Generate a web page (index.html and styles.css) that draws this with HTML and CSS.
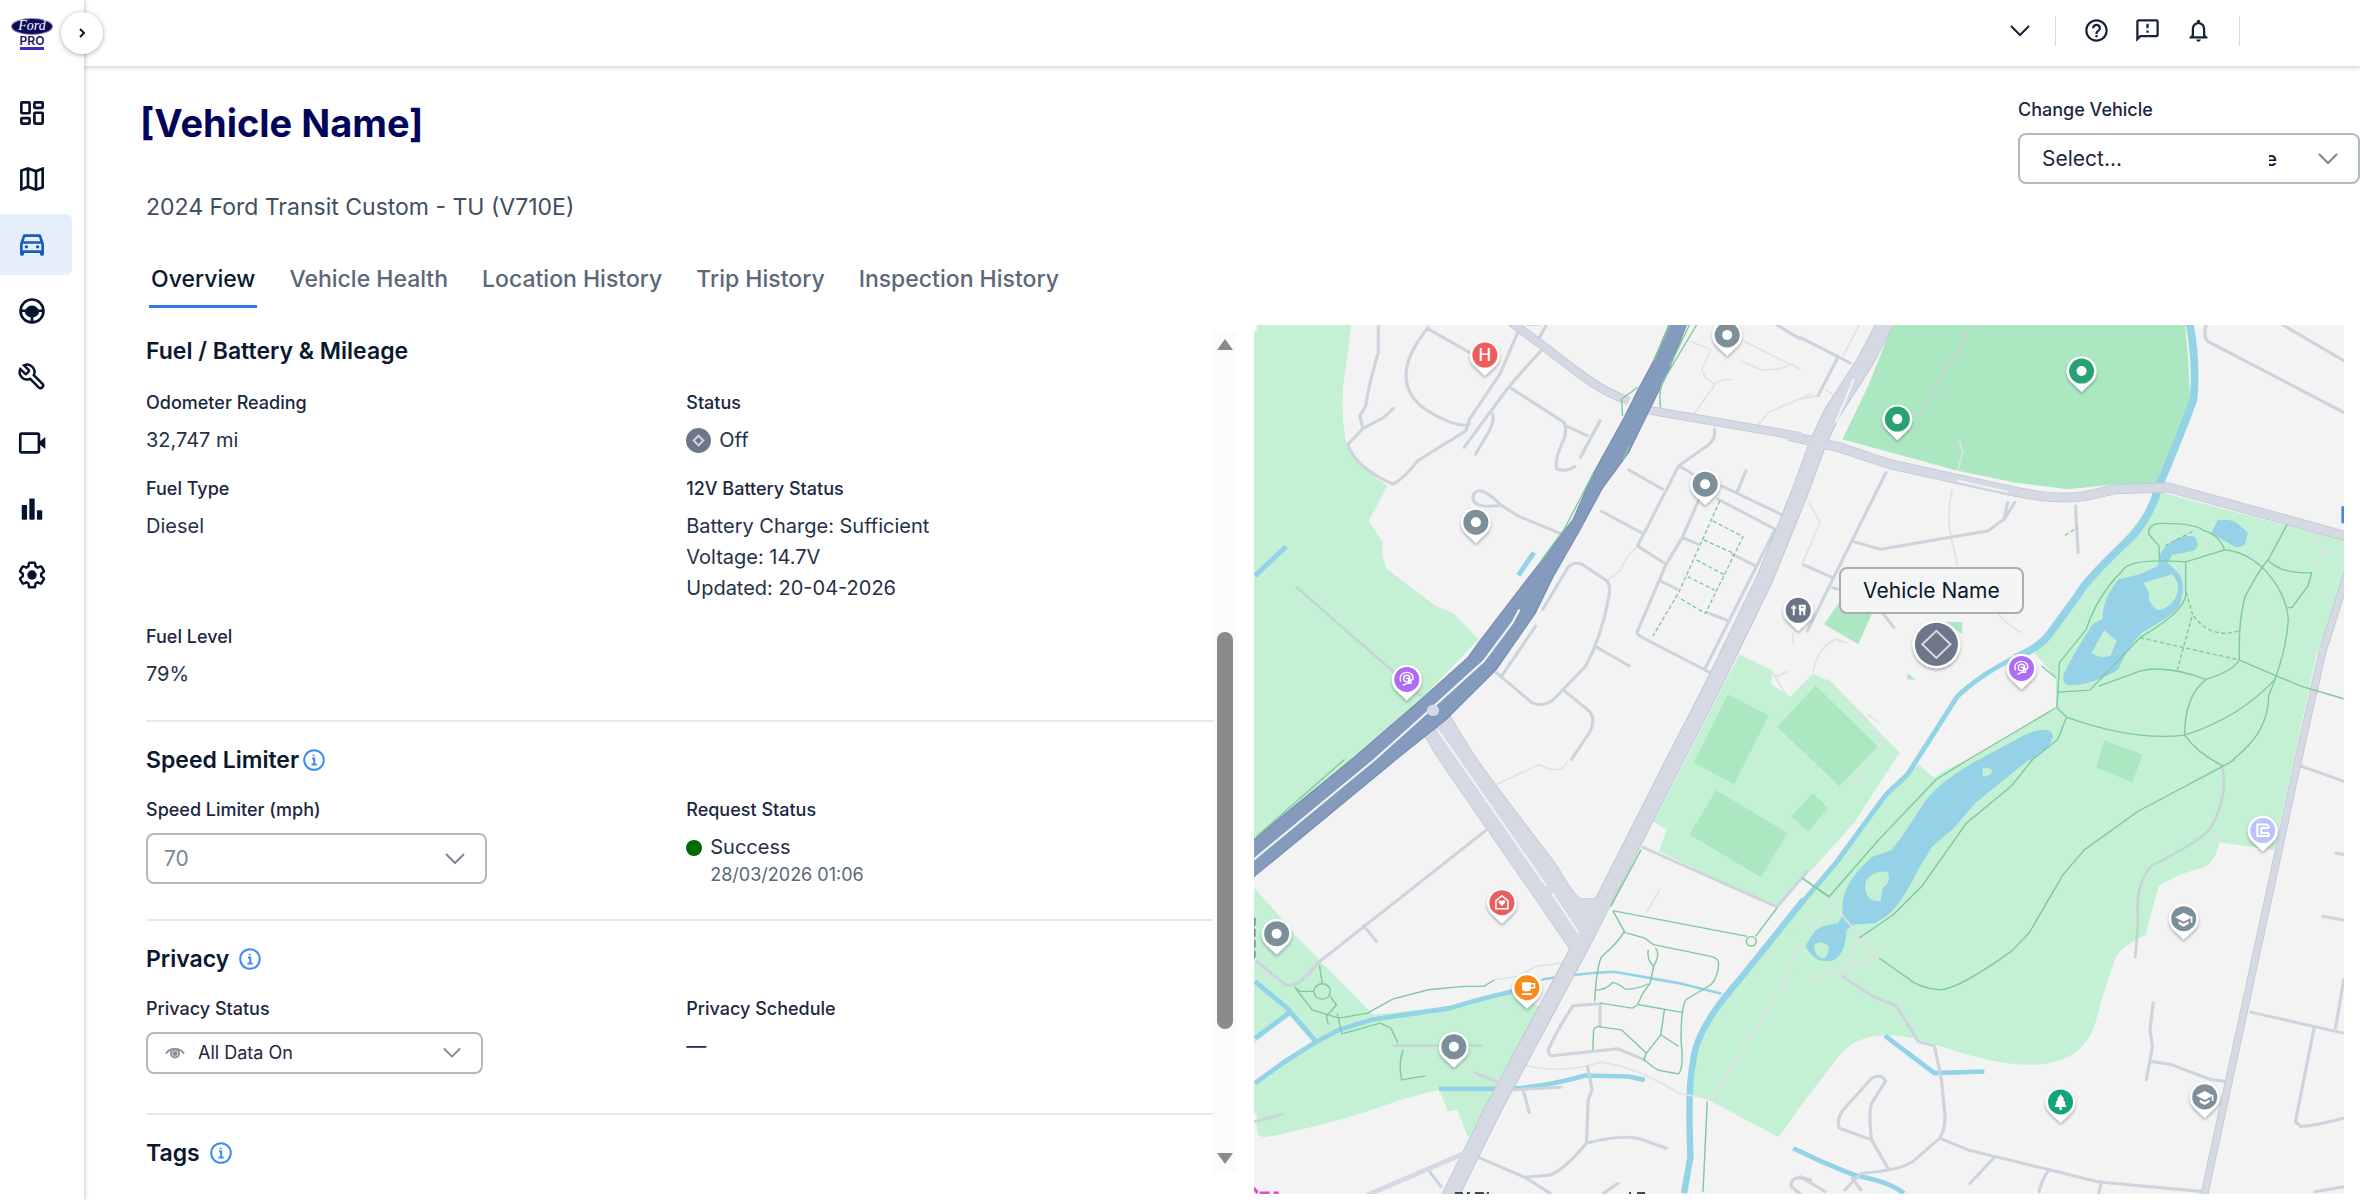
FILE: index.html
```html
<!DOCTYPE html>
<html lang="en">
<head>
<meta charset="utf-8">
<meta name="viewport" content="width=device-width, initial-scale=1">
<title>Vehicle overview</title>
<link rel="stylesheet" href="styles.css">
</head>
<body>
<div class="app">
  <aside class="sidebar">
    <a class="logo" href="#" aria-label="Home">
      <span class="logo-oval">Ford</span>
      <span class="logo-pro">PRO</span>
    </a>
    <nav class="nav" aria-label="Main">
      <a class="nav-item" href="#" aria-label="Dashboard"><svg class="nav-icon" viewBox="0 0 24 24"><g class="ln"><rect x="4" y="4" width="6.2" height="8.2" rx=".6"/><rect x="13.8" y="4" width="6.2" height="4.2" rx=".6"/><rect x="4" y="15.8" width="6.2" height="4.2" rx=".6"/><rect x="13.8" y="11.8" width="6.2" height="8.2" rx=".6"/></g></svg></a>
      <a class="nav-item" href="#" aria-label="Map"><svg class="nav-icon" viewBox="0 0 24 24"><path d="M20.5 3l-.16.03L15 5.1 9 3 3.36 4.9c-.21.07-.36.25-.36.48V20.5c0 .28.22.5.5.5l.16-.03L9 18.9l6 2.1 5.64-1.9c.21-.07.36-.25.36-.48V3.5c0-.28-.22-.5-.5-.5zM10 5.47l4 1.4v11.66l-4-1.4V5.47zm-5 .99l3-1.01v11.7l-3 1.16V6.46zm14 11.08l-3 1.01V6.86l3-1.16v11.84z"/></svg></a>
      <a class="nav-item active" href="#" aria-label="Vehicles" aria-current="page"><svg class="nav-icon" viewBox="0 0 24 24"><path d="M18.92 5.01C18.72 4.42 18.16 4 17.5 4h-11c-.66 0-1.21.42-1.42 1.01L3 11v8c0 .55.45 1 1 1h1c.55 0 1-.45 1-1v-1h12v1c0 .55.45 1 1 1h1c.55 0 1-.45 1-1v-8l-2.08-5.99zM6.85 6h10.29l1.08 3.11H5.77L6.85 6zM19 16H5v-5h14v5z"/><circle cx="7.8" cy="13.4" r="1.3"/><circle cx="16.2" cy="13.4" r="1.3"/></svg></a>
      <a class="nav-item" href="#" aria-label="Drivers"><svg class="nav-icon" viewBox="0 0 24 24"><circle class="ln" cx="12" cy="12" r="8.6"/><path d="M3 10.9h4.2C8.4 8.8 10 7.8 12 7.8s3.6 1 4.8 3.1H21v1.800h-3.500c-.6 2.200-2.200 3.600-4.500 3.900V21h-2v-4.400c-2.300-.3-3.900-1.700-4.500-3.900H3z"/></svg></a>
      <a class="nav-item" href="#" aria-label="Maintenance"><svg class="nav-icon" viewBox="-1 -1 26 26"><path class="ln" transform="translate(24 0) scale(-1 1)" d="M14.700 6.300a1 1 0 0 0 0 1.400l1.600 1.600a1 1 0 0 0 1.400 0l3.770-3.770a6 6 0 0 1-7.940 7.940l-6.910 6.910a2.120 2.120 0 0 1-3-3l6.910-6.910a6 6 0 0 1 7.940-7.940l-3.760 3.760z"/></svg></a>
      <a class="nav-item" href="#" aria-label="Video"><svg class="nav-icon" viewBox="0 0 24 24"><rect class="ln" x="3.200" y="5" width="14" height="14" rx="1"/><path d="M17.500 11l4.500-3.500v9L17.500 13z"/></svg></a>
      <a class="nav-item" href="#" aria-label="Reports"><svg class="nav-icon" viewBox="0 0 24 24"><rect x="4.300" y="9" width="4" height="11" rx=".6"/><rect x="10" y="4.200" width="4" height="15.800" rx=".6"/><rect x="15.700" y="13" width="4" height="7" rx=".6"/></svg></a>
      <a class="nav-item" href="#" aria-label="Settings"><svg class="nav-icon" viewBox="-1 -1 26 26"><path class="ln" d="M19.430 12.980c.04-.32.07-.64.07-.98 0-.34-.03-.66-.07-.98l2.110-1.650c.19-.15.24-.42.12-.64l-2-3.460c-.09-.16-.26-.25-.44-.25-.06 0-.12.01-.17.03l-2.490 1c-.52-.4-1.080-.73-1.690-.98l-.38-2.650C14.460 2.180 14.250 2 14 2h-4c-.25 0-.46.18-.49.42l-.38 2.650c-.61.25-1.170.59-1.690.98l-2.490-1c-.06-.02-.12-.03-.18-.03-.17 0-.34.09-.43.25l-2 3.460c-.13.22-.07.49.12.64l2.110 1.650c-.04.32-.07.65-.07.98 0 .33.03.66.07.98l-2.110 1.650c-.19.15-.24.42-.12.64l2 3.460c.09.16.26.25.44.25.06 0 .12-.01.17-.03l2.490-1c.52.4 1.080.73 1.690.98l.38 2.650c.03.24.24.42.49.42h4c.25 0 .46-.18.49-.42l.38-2.650c.61-.25 1.170-.59 1.690-.98l2.490 1c.06.02.12.03.18.03.17 0 .34-.09.43-.25l2-3.460c.12-.22.07-.49-.12-.64l-2.110-1.650z"/><circle cx="12" cy="12" r="3.800"/></svg></a>
    </nav>
    <button class="toggle" type="button" aria-label="Expand menu"><svg viewBox="0 0 10 14"><path d="M3 3l4 4-4 4"/></svg></button>
  </aside>

  <div class="page">
    <header class="topbar">
      <button class="icon-btn" type="button" aria-label="Open account list"><svg class="chev dark" viewBox="0 0 20 12"><path d="M1 1l9 9 9-9"/></svg></button>
      <span class="bar"></span>
      <button class="icon-btn" type="button" aria-label="Help"><svg class="top-icon" viewBox="0 0 24 24"><path d="M11 18h2v-2h-2v2zm1-16C6.480 2 2 6.480 2 12s4.480 10 10 10 10-4.480 10-10S17.520 2 12 2zm0 18c-4.410 0-8-3.590-8-8s3.590-8 8-8 8 3.590 8 8-3.590 8-8 8zm0-14c-2.210 0-4 1.790-4 4h2c0-1.100.9-2 2-2s2 .9 2 2c0 2-3 1.750-3 5h2c0-2.250 3-2.500 3-5 0-2.210-1.790-4-4-4z"/></svg></button>
      <button class="icon-btn" type="button" aria-label="Feedback"><svg class="top-icon" viewBox="0 0 24 24"><path d="M20 2H4c-1.100 0-1.990.9-1.990 2L2 22l4-4h14c1.100 0 2-.9 2-2V4c0-1.100-.9-2-2-2zm0 14H5.170l-.59.59-.58.58V4h16v12zm-9-4h2v2h-2zm0-6h2v4h-2z"/></svg></button>
      <button class="icon-btn" type="button" aria-label="Notifications"><svg class="top-icon" viewBox="0 0 24 24"><path d="M12 22c1.100 0 2-.9 2-2h-4c0 1.100.9 2 2 2zm6-6v-5c0-3.070-1.630-5.640-4.500-6.320V4c0-.83-.67-1.500-1.500-1.500s-1.500.67-1.500 1.500v.68C7.640 5.360 6 7.920 6 11v5l-2 2v1h16v-1l-2-2zm-2 1H8v-6c0-2.480 1.510-4.500 4-4.500s4 2.020 4 4.500v6z"/></svg></button>
      <span class="bar"></span>
    </header>

    <main class="main">
      <div class="head">
        <div class="head-text">
          <h1>[Vehicle Name]</h1>
          <p class="model">2024 Ford Transit Custom - TU (V710E)</p>
        </div>
        <div class="change">
          <label class="label" for="change">Change Vehicle</label>
          <div class="picker">
            <select id="change" class="select wide"><option>Select...</option></select>
            <span class="stray" aria-hidden="true">e</span>
            <svg class="chev" viewBox="0 0 20 12"><path d="M1 1l9 9 9-9"/></svg>
          </div>
        </div>
      </div>
      <nav class="tabs" aria-label="Vehicle sections">
        <a class="tab current" href="#" aria-current="page">Overview</a>
        <a class="tab" href="#">Vehicle Health</a>
        <a class="tab" href="#">Location History</a>
        <a class="tab" href="#">Trip History</a>
        <a class="tab" href="#">Inspection History</a>
      </nav>

      <div class="body">
        <div class="panel">
          <div class="sections">
            <section class="section first">
              <h2>Fuel / Battery &amp; Mileage</h2>
              <div class="fields">
                <div class="field"><h3 class="label">Odometer Reading</h3><p class="value">32,747 mi</p></div>
                <div class="field"><h3 class="label">Status</h3><p class="value status"><svg class="off" viewBox="0 0 26 26"><circle cx="13" cy="13" r="13"/><path d="M13 8l5 5-5 5-5-5z"/></svg>Off</p></div>
                <div class="field"><h3 class="label">Fuel Type</h3><p class="value">Diesel</p></div>
                <div class="field"><h3 class="label">12V Battery Status</h3><p class="value">Battery Charge: Sufficient<br>Voltage: 14.7V<br>Updated: 20-04-2026</p></div>
                <div class="field"><h3 class="label">Fuel Level</h3><p class="value">79%</p></div>
              </div>
            </section>
            <section class="section">
              <h2 class="tight">Speed Limiter<svg class="info" viewBox="0 0 22 22"><circle cx="11" cy="11" r="9.800"/><path d="M9 9.500h2.200V15.500M8.500 15.500h5.200M10.700 5.800v1.500"/></svg></h2>
              <div class="fields">
                <div class="field"><label class="label" for="limit">Speed Limiter (mph)</label>
                  <div class="picker limit"><select id="limit" class="select muted"><option>70</option></select><svg class="chev" viewBox="0 0 20 12"><path d="M1 1l9 9 9-9"/></svg></div></div>
                <div class="field"><h3 class="label">Request Status</h3><p class="value status"><span class="dot"></span>Success</p><p class="when">28/03/2026 01:06</p></div>
              </div>
            </section>
            <section class="section">
              <h2>Privacy<svg class="info" viewBox="0 0 22 22"><circle cx="11" cy="11" r="9.800"/><path d="M9 9.500h2.200V15.500M8.500 15.500h5.200M10.700 5.800v1.500"/></svg></h2>
              <div class="fields">
                <div class="field"><label class="label" for="privacy">Privacy Status</label>
                  <div class="picker privacy"><svg class="eye" viewBox="0 0 20 12"><path d="M1 6.500C5 .5 15 .5 19 6.500"/><circle cx="10" cy="6.500" r="4"/><circle class="pupil" cx="10" cy="6.500" r="1.500"/></svg><select id="privacy" class="select small"><option>All Data On</option></select><svg class="chev thin" viewBox="0 0 20 12"><path d="M1 1l9 9 9-9"/></svg></div></div>
                <div class="field"><h3 class="label">Privacy Schedule</h3><p class="value">—</p></div>
              </div>
            </section>
            <section class="section last">
              <h2>Tags<svg class="info" viewBox="0 0 22 22"><circle cx="11" cy="11" r="9.800"/><path d="M9 9.500h2.200V15.500M8.500 15.500h5.200M10.700 5.800v1.500"/></svg></h2>
            </section>
          </div>
          <div class="scrollbar" aria-hidden="true"><i class="up"></i><i class="track"><b class="thumb"></b></i><i class="down"></i></div>
        </div>

        <div class="map">
          <svg class="map-art" viewBox="1254 326 1090 868" preserveAspectRatio="xMidYMid slice" role="img" aria-label="Map of the area round the vehicle">
            <defs>
              <filter id="sh" x="-30%" y="-30%" width="160%" height="170%"><feDropShadow dx="0" dy="2" stdDeviation="1.500" flood-color="#4b5560" flood-opacity=".45"/></filter>
              <path id="pin" d="M0 21L-11 10.500A15 15 0 1 1 11 10.500Z" fill="#fff" filter="url(#sh)"/>
              <g id="cap" fill="#fff"><path d="M-8.500-1.500L0-6l8.500 4.500L0 3z"/><path d="M-5 2.500L0 5l5-2.500v2.500L0 8l-5-2.500z"/><path d="M7-2h1.700v6H7z"/></g>
              <g id="head" fill="none" stroke="#fff" stroke-width="1.400"><path d="M-6 2c-2-6 2-9 6-9 5 0 7 4 6 7l-2 1v3H0l-4 2"/><circle cx="0" cy="-1" r="3.200"/><path d="M-1-1h3v5"/></g>
            </defs>
            <rect class="land" x="1254" y="326" width="1090" height="868"/>
            <g transform="translate(1250 320) scale(.35714 .33333)">
              <!-- parks -->
              <g class="park">
                <path d="M0 0H287L262 200Q255 320 275 385 315 450 385 500L333 605 372 668Q368 720 385 750L520 860 570 882 640 960 480 1140 290 1320 0 1570Z"/>
                <path d="M0 1690L80 1785 130 1850 345 2085 560 2060 730 2015 810 2060 690 2295 612 2455 580 2370 555 2375 530 2310 420 2340Q260 2405 45 2452 20 2450 20 2430V2380H0Z"/>
                <path d="M1370 1005L1462 1052 1458 1092 1512 1132 1575 1062 1630 1090 1818 1300 1690 1510 1590 1630 1470 1762 1145 1595 1167 1530 1130 1507 1220 1320Z"/>
                <path transform="translate(1540 0)" d="M1003 518L1530 667V790L1445 1000 1380 1320 1325 1592 1173 1568Q1160 1630 1125 1645 1060 1660 1003 1698L965 1847Q895 1880 880 1920 850 2010 830 2090 800 2235 640 2235 540 2235 380 2175 300 2145 240 2147 150 2145 100 2220L0 2360-60 2452-260 2338-310 2325-300 2220-260 2120-180 2000 30 1720 200 1470 330 1335 375 1375Q410 1345 470 1320L715 1168V1075L655 1000Q720 920 800 780 930 640 1003 518Z"/>
              </g>
              <path class="land" d="M0 2180L112 2088 178 2168 95 2225 0 2300Z"/>
              <g class="field-area">
                <path d="M1338 1125L1452 1188 1355 1395 1243 1330ZM1475 1222L1583 1098 1757 1280 1650 1400ZM1305 1412L1505 1540 1430 1673 1230 1545Z"/>
                <path transform="translate(1540 0)" d="M265 0H1075L1085 120 1090 240 1050 370 1003 495 880 495 750 510 600 490 440 455 118 360 190 200ZM108 850L200 885 162 975 67 915ZM405 908H453V945ZM300 1062L322 1080H300ZM850 1262L958 1305 928 1388 828 1345ZM35 1420L78 1465 22 1537-25 1490Z"/>
              </g>
              <!-- water -->
              <g class="water">
                <path d="M15 770L102 682M752 768L795 700" class="w14"/>
                <path class="w22" transform="translate(1540 0)" d="M1087 0Q1110 130 1100 240 1060 360 1003 500 985 580 930 650 800 780 775 830L700 940Q670 985 600 1015"/>
                <path class="w14" transform="translate(1540 0)" d="M640 995Q520 1050 440 1130L300 1365 240 1425 100 1630 0 1755"/>
                <path class="w18" d="M1550 1740L1370 1980Q1245 2130 1240 2230 1225 2300 1233 2510L1215 2620"/>
                <path class="w14" d="M15 2290L95 2228 180 2170 250 2130 340 2100 560 2065Q650 2035 735 2015M15 1985L105 2065 185 2165M15 2155L110 2080M530 2307H730Q830 2300 940 2267L1060 2270 1105 2280"/>
                <path class="w8" d="M815 1980Q920 1960 1020 1956L1200 1990 1320 2022"/>
                <path class="w14" transform="translate(1540 1320)" d="M237 828L375 940 515 935M-20-155M-20 1165L60 1205 150 1245Q250 1265 290 1300"/>
              </g>
              <g transform="translate(1540 0)" class="lake">
                <path d="M1168 602Q1215 600 1225 615L1252 640 1245 672Q1230 690 1212 680L1150 642Z"/>
                <path d="M1020 685Q1060 640 1105 653 1122 690 1090 697L1040 707 1027 730 1060 765Q1080 800 1060 860 1040 890 955 940 915 980 890 1050 810 1100 750 1097 730 1090 737 1065 770 990 820 912L845 900Q845 840 890 780L950 765 1000 740Q1003 700 1020 685Z"/>
                <path d="M500 1320L630 1245Q700 1215 707 1250 700 1290 630 1328L490 1450 430 1525 370 1580 330 1650Q280 1760 240 1790L210 1810 150 1815 130 1830Q125 1910 90 1922 45 1935 15 1880 40 1825 65 1820L105 1810 118 1790V1755Q120 1690 200 1612L255 1592 285 1550 340 1460Q380 1390 500 1320Z"/>
                <path class="park" d="M960 790L1040 765Q1062 790 1055 820 1045 860 1000 873 970 850 975 820ZM850 932L885 965 868 1008Q840 1020 815 1000ZM185 1680Q210 1650 245 1657 255 1690 230 1705L225 1745Q190 1745 185 1720 178 1700 185 1680ZM40 1875Q60 1860 80 1880 80 1915 60 1917 35 1900 40 1875ZM510 1348Q530 1340 538 1355 525 1375 510 1370Z"/>
              </g>
              <!-- faint tracks -->
              <g class="track-line">
                <path d="M1230 65L1290 92 1265 150Q1270 180 1302 195L1240 290M1302 195Q1320 178 1355 182M1380 65L1500 130 1540 150M1375 125L1430 152Q1480 155 1520 135M1570 225L1450 280 1420 320M1085 683Q1050 710 1040 750L1000 783M1405 1050L1480 1070 1505 1055M1460 1055L1500 1125M1520 940V975M690 1395L810 1335Q870 1370 890 1325M685 1980L750 1970 800 1940 875 1930M765 2235Q870 2265 980 2227 1080 2240 1200 2320L1290 2338 1500 1990 1540 1870M1110 1780L1148 1708M15 1925Q80 2000 125 2000"/>
                <path transform="translate(1540 0)" d="M445 365L455 400 440 455M425 510Q405 600 430 690L440 740M555 885Q590 925 620 940M25 550L55 610 5 735M165 18L120 110M70 210L100 235M0 240L50 230M35 1060Q50 980 100 960L130 970M75 1080L230 1255 195 1325 130 1415M190 1185L220 1210M1180 1340Q1200 1430 1145 1530M1145 1530L1173 1568M80 1735L165 1850 215 1915 0 1985M165 1850L120 1970M0 1850L95 1780M1430 640L1465 705 1520 700M1465 705L1430 760"/>
              </g>
              <g class="park-road">
                <path d="M130 803L480 1130M400 2177H650"/>
                <path transform="translate(1540 0)" d="M480 0Q460 60 440 105L410 140Q360 260 325 295M1180 1340Q1200 1430 1145 1530 1110 1570 980 1640 935 1700 945 1800L937 1915"/>
              </g>
              <!-- streets -->
              <g class="street">
                <path d="M360 18V100Q330 210 325 260L308 290 317 328 375 295 402 268M317 328L275 375Q290 440 400 495 430 480 470 425 560 365 605 335L615 300 700 165 750 40M500 25Q380 180 490 270 580 330 615 315M500 30L615 100M815 95Q750 170 720 210L600 385M680 285Q685 310 665 345L632 405M730 207L880 310Q890 340 875 370 850 430 860 450 885 460 910 442M885 320L945 350M980 305L925 415M870 643L750 590 700 555Q640 490 625 530 620 570 700 558M820 870L890 745Q905 725 930 735L1000 785Q1010 800 1005 830 985 950 940 1040L850 1140Q820 1165 790 1150L690 1060M800 920L705 1070M965 980L1062 1040M875 1110L950 1175Q970 1200 950 1240L900 1320M1060 452L1155 510M985 577L1095 640M1300 330Q1305 360 1280 380L1200 440 1085 680 1165 735 1210 655 1255 545M1200 440L1240 465M1320 500L1495 590M1388 455L1365 515M1310 540L1470 630 1275 1045M1165 735L1085 935Q1080 945 1100 955L1285 1058M1210 655L1255 675M1150 785L1195 810M1350 705L1415 740M1280 880L1340 905M1475 18L1540 60M800 75L830 18M780 18L815 15M660 1533L190 1930Q140 2005 100 1995L20 1925M318 1818L355 1865M1100 1583L1475 1762 1560 1655M980 2052L905 2058Q870 2110 835 2190 835 2210 850 2207L1030 2187 1105 2220M980 2052V2120M945 2240L958 2310 947 2340 942 2470Q1050 2440 1100 2460L1165 2485M942 2470Q880 2550 840 2565L770 2572M635 2510L770 2572 840 2620M630 2258L690 2285M740 2310L870 2302M765 2310L782 2378M15 2405L92 2382M1030 2590L990 2620M500 2550L535 2600M1570 2580Q1510 2560 1515 2600L1560 2640"/>
                <path transform="translate(1540 0)" d="M0 55L140 132M105 115L50 230M240 460L100 760 20 935M150 668L225 690 415 655 525 635 570 600 600 550M580 550L570 600M770 560L777 700M10 737L90 775M90 805L115 812M230 880L262 925M1135 18Q1125 60 1145 70L1520 280M1350 18L1520 125M1395 1338L1520 1385M1498 1600L1520 1605M1462 1790L1520 1802M1260 2077L1520 2140M1520 1980L1497 2125M1437 2125L1385 2405 1400 2420Q1450 2415 1520 2395M987 2050L978 2130 985 2180 968 2280M982 2225L1040 2235 1150 2280 1195 2285M118 1970L205 2030 270 2060 330 2165 375 2178 395 2280 405 2390Q405 2430 390 2455L320 2520Q290 2550 170 2560L125 2610M145 2575L170 2610M245 2545L200 2460 110 2425Q100 2400 120 2370L200 2275Q230 2260 238 2285L200 2350Q190 2380 200 2465M390 2455L470 2490 700 2550 830 2585 1130 2615M545 2510L475 2590M695 2550Q675 2580 668 2615M842 2585L835 2620M0 2570L70 2615M1440 2615L1520 2600"/>
              </g>
              <!-- main roads -->
              <g class="edge">
                <path class="w26" d="M720 0L820 80 930 170Q1000 225 1060 245M1110 272L1540 352"/>
                <path class="w30" transform="translate(1540 0)" d="M-30 350L110 385 250 435 590 515Q720 545 800 530L880 510 1030 505 1530 652"/>
                <path class="w22" transform="translate(1540 0)" d="M1540 730L1460 1000 1395 1310 1130 2625"/>
                <path class="w46" d="M1785 0L1720 130 1630 280 1590 370 1535 530 1440 780 1300 1090 1190 1320 930 1870 680 2370 560 2630"/>
                <path class="w4" d="M485 1240L530 1320 895 1885 920 1890 990 1738H930Q910 1735 860 1640L690 1400 635 1320 560 1190"/>
              </g>
              <g class="major">
                <path class="w22" d="M720 0L820 80 930 170Q1000 225 1060 245M1110 272L1540 352"/>
                <path class="w26" transform="translate(1540 0)" d="M-30 350L110 385 250 435 590 515Q720 545 800 530L880 510 1030 505 1530 652"/>
                <path class="w18" transform="translate(1540 0)" d="M1540 730L1460 1000 1395 1310 1130 2625"/>
                <path class="junction" d="M485 1240L530 1320 895 1885 920 1890 990 1738H930Q910 1735 860 1640L690 1400 635 1320 560 1190Z"/>
                <path class="w42" d="M1785 0L1720 130 1630 280 1590 370 1535 530 1440 780 1300 1090 1190 1320 930 1870 680 2370 560 2630"/>
                <path class="w14" d="M330 2625L600 2500"/>
              </g>
              <path class="median" d="M525 1230L830 1700M845 1720L920 1840M1690 180L1640 310M1980 485L2120 518"/>
              <path class="highway" d="M1180 0L1130 125 1085 215 1045 300 960 465 905 600 820 720 740 830 640 970 610 1015 480 1140 285 1320 0 1570V1682L410 1320 550 1200 690 1050 800 880 850 770 930 620 985 510 1060 400 1110 290 1170 160 1228 0Z"/>
              <path class="median" d="M755 870L735 910 655 1025 480 1195 350 1320 0 1630"/>
              <circle class="median-dot" cx="513" cy="1173" r="17"/>
              <!-- footpaths -->
              <g class="foot">
                <path d="M1175 18L1130 125M1085 205L1040 240 1043 290M1250 18L1165 170Q1140 210 1150 268M1230 18L1175 140M1062 380L1045 420M960 465L880 630 815 725M20 1550L265 1320M1095 1590L1010 1760M1015 1773L1392 1850M1415 1850L1475 1765M1017 1775L1048 1835Q1030 1870 985 1910 970 1940 965 2045M1048 1838L1105 1855 1130 1875 1290 1910Q1310 1915 1312 1930 1310 1975 1290 1995L1220 2040Q1205 2070 1207 2170 1215 2240 1200 2262 1160 2255 1140 2250L1102 2220 1110 2200 1150 2145 1160 2070M1115 1890Q1110 1920 1130 1940 1150 1900 1135 1885M1130 1940L1120 1990 1100 2020 1085 2055 1070 2065 980 2050M965 2012Q1000 2010 1015 1988 1030 1990 1050 2008 1080 2010 1115 1992M1088 2055L1210 2078M1150 2145L1200 2180M960 2190L962 2130Q970 2115 985 2122L1040 2130 1110 2200M1280 2345L1268 2615M195 1935L203 1990M125 2002L140 2015H180M128 2005L175 2070 250 2095 330 2080 400 2038 500 2010 600 2000 655 2000 685 1980M225 2030L243 2055 215 2090 220 2115M245 2080L258 2142 365 2110 395 2125 415 2170M430 2190Q415 2230 425 2280L492 2268M1545 1675L1620 1730"/>
                <circle cx="1403" cy="1865" r="14"/><circle cx="203" cy="2015" r="23"/>
                <path transform="translate(1540 0)" d="M1005 720L1003 680 975 645Q970 620 1000 613 1100 610 1130 635 1170 645 1187 692 1240 695 1293 745 1360 820 1365 900 1360 1000 1310 1130 1310 1240 1210 1320M1187 692L1078 728Q920 715 900 755 830 830 800 930L725 1030 718 1165 745 1193 720 1260 650 1320M720 1118L810 1112 950 955Q1070 880 1078 830V728M835 1100L950 1055Q1020 1035 1135 1080 1210 1055 1228 1022 1225 900 1245 830 1290 740 1310 720L1362 615M1310 725Q1350 765 1430 760L1420 800 1375 865H1362M1135 1080Q1075 1130 1075 1247 1230 1195 1330 1077M745 1193Q930 1265 1075 1247 1110 1300 1183 1340L1215 1320M1228 1022L1400 1100 1520 1138M715 1165L470 1320 380 1380 220 1560 80 1732M80 1732L5 1675M675 1040L715 1075M650 1320L590 1400 465 1510 340 1700 260 1785 165 1855M1183 1340L945 1475 795 1590 735 1665 640 1840 590 1895Q440 2010 390 2010 330 2005 300 1975L220 1915"/>
                <g class="dash"><path d="M1315 545L1200 820 1128 950M1295 605L1380 652 1275 882 1200 835M1270 662L1350 700M1250 722L1330 768M1225 772L1305 815"/><path transform="translate(1540 0)" d="M1080 820L1097 885 1055 1050M1100 890Q1150 960 1225 935M950 955L1228 1022M1020 680L1100 635M740 648L775 625"/></g>
              </g>
            </g>
            <!-- labels cut off by the lower edge -->
            <path d="M1455 1193h8m4 0h3m5 0h9m3 0h2m140 0h2m6 0h8" stroke="#3b475c" stroke-width="2"/>
            <path d="M1254 1188l4 5m2 0h10m4 0h5" stroke="#e846c8" stroke-width="3"/>
            <path d="M2342 507v17" stroke="#4a86e8" stroke-width="3"/>
            <path d="M1254 918v40" stroke="#7788a8" stroke-width="4" stroke-dasharray="8 3"/>
            <rect x="1254" y="326" width="3" height="6" fill="#fff"/>
            <!-- places -->
            <g transform="translate(1485 356)"><use href="#pin"/><circle r="12.500" fill="#f15b5b"/><text class="pin-text" y="6">H</text></g>
            <g transform="translate(1727 336)"><use href="#pin"/><circle class="grey" r="12.500"/><circle class="hole" r="5"/></g>
            <g transform="translate(1705 485)"><use href="#pin"/><circle class="grey" r="12.500"/><circle class="hole" r="5"/></g>
            <g transform="translate(1476 523)"><use href="#pin"/><circle class="grey" r="12.500"/><circle class="hole" r="5"/></g>
            <g transform="translate(1277 934)"><use href="#pin"/><circle class="grey" r="12.500"/><circle class="hole" r="5"/></g>
            <g transform="translate(1454 1047)"><use href="#pin"/><circle class="grey" r="12.500"/><circle class="hole" r="5"/></g>
            <g transform="translate(2081 372)"><use href="#pin"/><circle class="green" r="12.500"/><circle class="hole" r="5"/></g>
            <g transform="translate(1897 420)"><use href="#pin"/><circle class="green" r="12.500"/><circle class="hole" r="5"/></g>
            <g transform="translate(1798 611)"><use href="#pin"/><circle r="12.500" fill="#687586"/><path d="M-4.500-5v10M-7-2.500h5M2 5v-5h4v5M1.500-4.500h5v3h-5z" stroke="#fff" stroke-width="2" fill="none"/></g>
            <g transform="translate(1407 680)"><use href="#pin"/><circle class="purple" r="12.500"/><use href="#head"/></g>
            <g transform="translate(2021 669)"><use href="#pin"/><circle class="purple" r="12.500"/><use href="#head"/></g>
            <g transform="translate(1502 903)"><use href="#pin"/><circle r="12.500" fill="#e75f5f"/><path d="M-6 6v-8l6-5 6 5v8z" fill="none" stroke="#fff" stroke-width="1.500"/><path d="M0 3.500l-3.500-4q0-3 3.500-1.200 3.500-1.800 3.500 1.200z" fill="#fff"/></g>
            <g transform="translate(1527 988)"><use href="#pin"/><circle r="12.500" fill="#f98b1d"/><path d="M-5-5.500h9v6q0 3-3 3h-3q-3 0-3-3zM-5 5.500h10v1.800h-10z" fill="#fff"/><path d="M4-4h3.500v4H4" fill="none" stroke="#fff" stroke-width="1.500"/></g>
            <g transform="translate(2262 831)"><use href="#pin"/><circle r="12.500" fill="#bdc2fb"/><path d="M6-2.500v-1.500l-2-2h-9.500v11.500H6V2.500M6-2.500H-1.500v5H6" fill="none" stroke="#fff" stroke-width="2"/></g>
            <g transform="translate(2183 919)"><use href="#pin"/><circle class="grey" r="12.500"/><use href="#cap"/></g>
            <g transform="translate(2204 1097)"><use href="#pin"/><circle class="grey" r="12.500"/><use href="#cap"/></g>
            <g transform="translate(2060 1102)"><use href="#pin"/><circle r="12.500" fill="#12a47b"/><path d="M0-8l3.500 5H2.500L5 1H4l2 4H1.200v3h-2.400V5H-6l2-4h-1l2.500-4h-1z" fill="#fff"/></g>
            <g transform="translate(1936 645)"><circle r="24" fill="#fff" filter="url(#sh)"/><circle r="21.500" fill="#6e778a"/><path d="M0-13.500L14 0 0 13.500-14 0z" fill="none" stroke="#d9dde3" stroke-width="2"/></g>
          </svg>
          <div class="tip">Vehicle Name</div>
        </div>
      </div>
    </main>
  </div>
</div>
</body>
</html>
```

FILE: styles.css
```css
* { box-sizing: border-box; }
body, h1, h2, h3, p { margin: 0; }
body { font-family: Inter, "Liberation Sans", sans-serif; color: #0c1730; background: #fff; }
a { color: inherit; text-decoration: none; }
button { border: 0; background: none; padding: 0; color: inherit; cursor: pointer; }
svg { display: block; flex: none; }

.app { display: flex; height: 100vh; min-height: 700px; overflow: hidden; }

/* sidebar */
.sidebar { position: relative; z-index: 2; flex: none; width: 84px; background: #fff; box-shadow: 1px 0 4px rgba(40, 60, 70, .28); }
.logo { display: flex; flex-direction: column; align-items: center; width: 64px; height: 82px; padding-top: 18px; }
.logo-oval { width: 42px; height: 17px; border-radius: 50%; background: #0b0b5c; border: 1px solid #8d8dba; color: #fff; font: italic 14px/14px "Liberation Serif", serif; text-align: center; }
.logo-pro { border-bottom: 3px solid #4526c8; font-size: 12px; font-weight: 600; line-height: 12px; color: #17175f; }
.nav { display: flex; flex-direction: column; gap: 5px; }
.nav-item { display: flex; align-items: center; width: 72px; height: 61px; padding-left: 16px; border-radius: 0 6px 6px 0; color: #07132e; }
.nav-item.active { background: #e5effc; color: #145cc4; }
.nav-icon { width: 32px; height: 32px; fill: currentColor; }
.nav-icon .ln { fill: none; stroke: currentColor; stroke-width: 2; }
.toggle { position: absolute; top: 12px; left: 61px; display: grid; place-items: center; width: 42px; height: 42px; border-radius: 50%; background: #fff; box-shadow: 0 1px 5px rgba(30, 40, 50, .4); }
.toggle svg { width: 10px; height: 14px; fill: none; stroke: #101820; stroke-width: 2; }

/* top bar */
.page { flex: 1; min-width: 0; display: flex; flex-direction: column; }
.topbar { flex: none; display: flex; align-items: center; justify-content: flex-end; height: 67px; padding: 0 120px 5px 0; border-bottom: 1px solid #dde3e4; box-shadow: 0 1px 4px rgba(40, 60, 70, .2); }
.icon-btn { display: grid; place-items: center; width: 51px; height: 40px; color: #16223b; }
.top-icon { width: 27px; height: 27px; fill: currentColor; }
.bar { width: 1px; height: 30px; background: #d9dde2; margin: 0 15px; }
.bar:first-of-type { margin-left: 10px; }
.bar:last-child { margin-right: 0; }
.chev { width: 20px; height: 12px; fill: none; stroke: #7d8691; stroke-width: 2; }
.chev.dark { stroke: #16223b; }

/* page head */
.main { flex: 1; min-height: 0; display: flex; flex-direction: column; padding-left: 62px; }
.head { display: flex; justify-content: space-between; }
.head-text { padding-top: 32px; }
h1 { margin-left: -6px; font-size: 38px; line-height: 48px; font-weight: 700; color: #03055b; }
.model { margin-top: 46px; font-size: 23px; line-height: 28px; color: #414e61; }
.change { width: 342px; padding-top: 31px; }
.tabs { display: flex; gap: 30px; margin-top: 44px; padding-left: 3px; }
.tab { padding: 0 2px 12px; border-bottom: 3px solid transparent; font-size: 23px; line-height: 28px; font-weight: 500; color: #5b6778; }
.tab.current { color: #0c1730; border-color: #2f78e0; }

.label { display: block; font-size: 18px; line-height: 24px; font-weight: 500; color: #1b2741; }
.picker { position: relative; margin-top: 11px; }
.picker .chev { position: absolute; right: 22px; top: 50%; margin-top: -6px; pointer-events: none; }
.select { display: block; width: 100%; height: 51px; padding: 0 16px; appearance: none; border: 2px solid #b4b9c0; border-radius: 8px; background: #fff; font: 21px/28px Inter, sans-serif; color: #1b2741; }
.select.wide { padding-left: 22px; }
.select.muted { color: #7d858f; }
.limit { width: 341px; }
.privacy { width: 337px; margin-bottom: 7px; }
.privacy .chev { width: 18px; }
.select.small { height: 42px; padding-left: 50px; font-size: 18px; }
.eye { position: absolute; left: 19px; top: 15px; width: 20px; height: 12px; fill: none; stroke: #8a929c; stroke-width: 2; }
.eye .pupil { fill: #6d7680; }
.stray { position: absolute; right: 83px; top: 13px; font-size: 20px; line-height: 26px; font-weight: 500; }
.stray::after { content: ""; position: absolute; left: 0; top: 0; width: 4px; height: 100%; background: #fff; }

/* body */
.body { flex: 1; min-height: 0; display: grid; grid-template-columns: minmax(0, 1fr) minmax(0, 1fr); gap: 17px; margin-top: 17px; padding: 0 16px 6px 0; }
.panel { display: flex; min-height: 0; padding-bottom: 22px; }
.sections { flex: 1; min-width: 0; overflow: hidden; }
.section { padding: 24px 0 32px; border-bottom: 2px solid #e6e9ec; }
.section.first { padding: 12px 0 30px; }
.section.last { border: 0; padding-bottom: 0; }
h2 { display: flex; align-items: center; gap: 10px; font-size: 23px; line-height: 28px; font-weight: 600; }
h2.tight { gap: 4px; }
.info { width: 22px; height: 22px; fill: none; stroke: #3f8cf0; stroke-width: 2; }
.fields { display: grid; grid-template-columns: 1fr 1fr; gap: 21px 14px; margin-top: 24px; }
.first .fields { margin-top: 26px; }
.value { margin-top: 10px; font-size: 20px; line-height: 31px; color: #253147; }
.status { display: flex; align-items: center; gap: 8px; }
.off { width: 25px; height: 25px; fill: #6c7787; }
.off path { fill: none; stroke: #d5dae0; stroke-width: 2; }
.dot { width: 16px; height: 16px; border-radius: 50%; background: #006b00; }
.when { margin-left: 24px; font-size: 18px; line-height: 24px; color: #5b6778; }

.scrollbar { flex: none; display: flex; flex-direction: column; align-items: center; width: 24px; margin-top: 6px; padding: 8px 0; background: #fbfbfb; }
.track { flex: 1; width: 16px; margin: 12px 0; padding-top: 270px; }
.thumb { display: block; height: 397px; border-radius: 8px; background: #8a8a8a; }
.up, .down { border: 8px solid transparent; }
.up { border-top: 0; border-bottom: 11px solid #8a8a8a; }
.down { border-bottom: 0; border-top: 11px solid #8a8a8a; }

/* map */
.map { position: relative; min-height: 0; overflow: hidden; }
.map-art { width: 100%; height: 100%; }
.tip { position: absolute; left: 53.7%; top: 27.8%; padding: 7px 22px; border: 2px solid #a9aeb3; border-radius: 8px; background: #f4f5f5; font-size: 21px; line-height: 29px; color: #0c1730; white-space: nowrap; }
.land { fill: #f4f3f4; }
.park { fill: #c4f0d4; }
.field-area { fill: #abe8c1; }
.lake { fill: #95d2e8; }
.water { fill: none; stroke: #92d3e8; }
.street, .major, .edge, .track-line, .park-road, .foot { fill: none; stroke-linejoin: round; }
.street { stroke: #ccd4de; stroke-width: 9; stroke-linecap: round; }
.major { stroke: #d4d9e3; }
.major .junction { fill: #d4d9e3; stroke: none; }
.edge { stroke: #bec6d2; }
.highway { fill: #859bbe; stroke: #7489ad; stroke-width: 3; stroke-linejoin: round; }
.track-line { stroke: #e0e2e3; stroke-width: 5; }
.park-road { stroke: #c4d5d3; stroke-width: 7; }
.foot { stroke: #7fc9a0; stroke-width: 4; }
.dash { stroke-dasharray: 12 7; }
.median { fill: none; stroke: #f1f3f6; stroke-width: 6; }
.median-dot { fill: #d4d9e3; }
.w4 { stroke-width: 4; }
.w8 { stroke-width: 8; }
.w14 { stroke-width: 14; }
.w18 { stroke-width: 18; }
.w22 { stroke-width: 22; }
.w26 { stroke-width: 26; }
.w30 { stroke-width: 30; }
.w42 { stroke-width: 44; }
.w46 { stroke-width: 49; }
.grey { fill: #7d8f9b; }
.green { fill: #26a274; }
.purple { fill: #ae6bf5; }
.hole { fill: #fff; }
.pin-text { fill: #fff; font-size: 17px; font-weight: 500; text-anchor: middle; }
```
